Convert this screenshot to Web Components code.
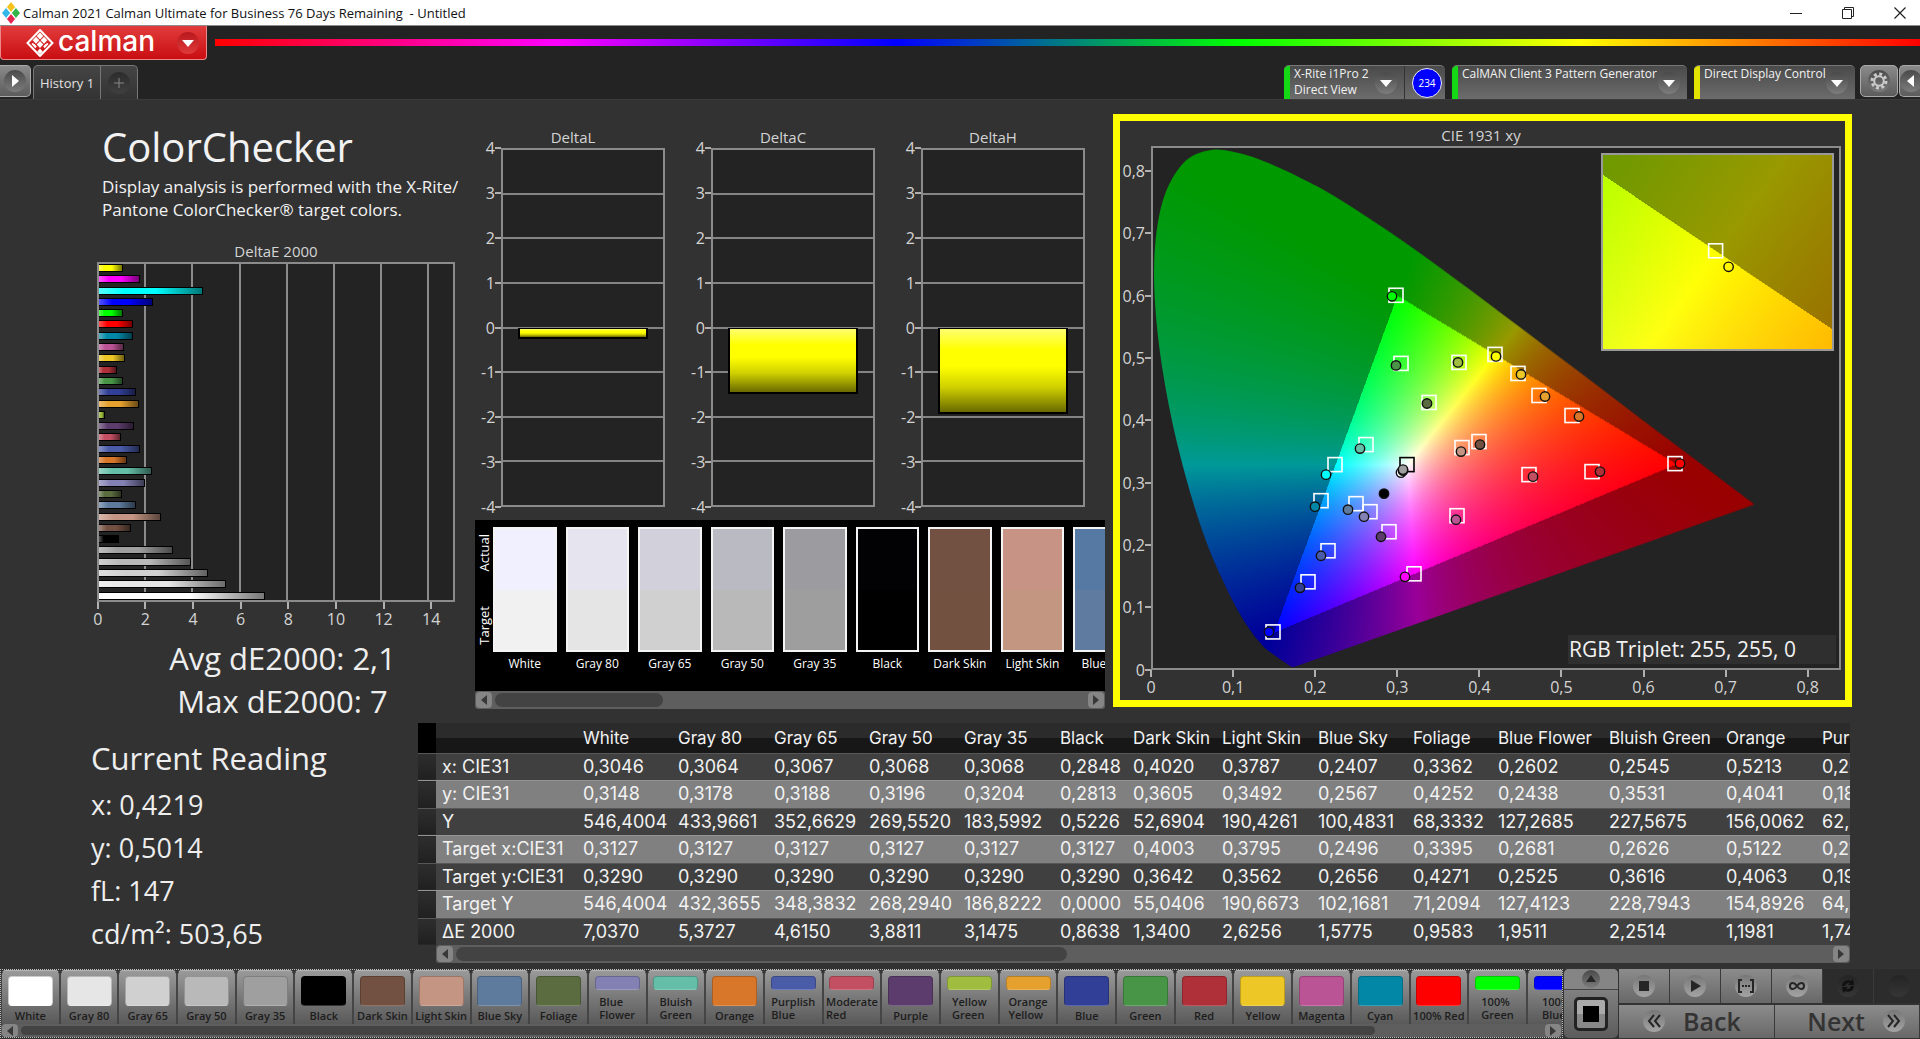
<!DOCTYPE html>
<html lang="en">
<head>
<meta charset="utf-8">
<title>Calman 2021</title>
<style>
html, body { margin: 0; height: 100%; }
body { background: #323232; color: #eee; font-family: "Open Sans", "Noto Sans", sans-serif; overflow: hidden; }
</style>
</head>
<body>
<calman-app></calman-app>
<script>
const RESET = `*{box-sizing:border-box}button{font:inherit;color:inherit;border:0;padding:0;margin:0;background:none;cursor:pointer}`;
function define(name, css, html, setup) {
  customElements.define(name, class extends HTMLElement {
    connectedCallback() {
      if (this.shadowRoot) return;
      const root = this.attachShadow({ mode: 'open' });
      root.innerHTML = `<style>${RESET}${css}</style>${typeof html === 'function' ? html(this) : html}`;
      if (setup) setup(root, this);
    }
  });
}

/* ---------- colour patches ---------- */
const PATCHES = [
  ['White', '#ffffff', 7.037], ['Gray 80', '#e6e6e6', 5.3727], ['Gray 65', '#d0d0d0', 4.615], ['Gray 50', '#b9b9b9', 3.8811],
  ['Gray 35', '#9f9f9f', 3.1475], ['Black', '#000000', .8638], ['Dark Skin', '#735142', 1.34], ['Light Skin', '#c49582', 2.6256],
  ['Blue Sky', '#5e7b9e', 1.5775], ['Foliage', '#5a6c40', .9583], ['Blue Flower', '#8380b3', 1.9511], ['Bluish Green', '#65bfa8', 2.2514],
  ['Orange', '#d8772a', 1.1981], ['Purplish Blue', '#4a5ba8', 1.74], ['Moderate Red', '#c35062', .95], ['Purple', '#5c3c6c', 1.5],
  ['Yellow Green', '#a0bd40', .27], ['Orange Yellow', '#e5a02e', 1.68], ['Blue', '#323f96', 1.56], ['Green', '#489548', 1],
  ['Red', '#af3038', .76], ['Yellow', '#ecc726', 1.12], ['Magenta', '#bb5494', 1.06], ['Cyan', '#0288a6', 1.42],
  ['100% Red', '#ff0000', 1.42], ['100% Green', '#00ff00', 1], ['100% Blue', '#0000ff', 2.28], ['100% Cyan', '#00ffff', 4.4],
  ['100% Magenta', '#ff00ff', 1.74], ['100% Yellow', '#ffff00', 1]
];
const ACTUAL = ['#f0f0ff', '#e5e4ef', '#d2d0da', '#babac2', '#9c9ba0', '#020204', '#735142', '#c69385', '#5579a2'];
const TARGET = ['#f1f1f1', '#e5e5e5', '#d0d0d0', '#b9b9b9', '#9e9e9e', '#000000', '#725140', '#c29681', '#5f7b9f'];

/* ---------- title bar ---------- */
define('title-bar', `
:host{display:flex;align-items:center;gap:40px;height:26px;background:#fff;color:#111;font-size:13px;border-bottom:1px solid #8a8a8a;padding:0 14px 0 2px}
.t{flex:1;display:flex;align-items:center;gap:3px;white-space:pre}
.mark{width:18px;height:22px}
button{width:12px;height:24px;display:grid;place-items:center}
`, `
<div class="t"><svg class="mark" viewBox="0 0 18 22"><path d="M9 0l4.500 5.500L9 11 4.500 5.500z" fill="#f6c21c"/><path d="M4.500 5.500L9 11l-4.500 5.500L0 11z" fill="#35b6e8"/><path d="M13.500 5.500L18 11l-4.500 5.500L9 11z" fill="#33b44a"/><path d="M9 11l4.500 5.500L9 22l-4.500-5.500z" fill="#e5254f"/><path d="M4.500 5.500l9 11M13.500 5.500l-9 11" stroke="#fff" stroke-width="1.200"/></svg><span>Calman 2021 Calman Ultimate for Business 76 Days Remaining  - Untitled</span></div>
<button aria-label="Minimize"><svg width="12" height="12"><path d="M0 6.500h12" stroke="#222"/></svg></button>
<button aria-label="Restore"><svg width="12" height="12" fill="none" stroke="#222"><path d="M.5 2.500h9v9h-9zM2.500 2.500v-2h9v9h-2"/></svg></button>
<button aria-label="Close"><svg width="12" height="12"><path d="M.5.5l11 11M11.500.5l-11 11" stroke="#222" stroke-width="1.200"/></svg></button>`);

/* ---------- small round icon ---------- */
define('round-icon', `
:host{display:grid;place-items:center;width:22px;height:22px;border-radius:50%;background:linear-gradient(var(--a,#4a4a4a),var(--b,#7c7c7c));color:#fff}
svg{display:block}`, el => {
  const k = el.getAttribute('kind');
  const p = {
    down: '<path d="M3 6h12l-6 7z" fill="currentColor"/>',
    right: '<path d="M6 3l7 6-7 6z" fill="currentColor"/>',
    left: '<path d="M12 3L5 9l7 6z" fill="currentColor"/>',
    up: '<path d="M4 12h10L9 5z" fill="currentColor"/>',
    plus: '<path d="M9 4v10M4 9h10" stroke="currentColor"/>',
    stop: '<path d="M4 4h10v10H4z" fill="currentColor"/>',
    play: '<path d="M5 3l10 6-10 6z" fill="currentColor"/>',
    step: '<path d="M5 3H2v12h3M13 3h3v12h-3" fill="none" stroke="currentColor" stroke-width="2"/><path d="M5 8h2v2H5zM8 8h2v2H8zM11 8h2v2h-2z" fill="currentColor"/>',
    loop: '<path d="M9 9C6 4.500 2 5.500 2 9s4 4.500 7 0 7-3.500 7 0-4 4.500-7 0z" fill="none" stroke="currentColor" stroke-width="2"/>',
    sync: '<path d="M3 9a6 6 0 0 1 9-5l2-2 1 6H9l2-2a4 4 0 0 0-5 3zM15 9a6 6 0 0 1-9 5l-2 2-1-6h6l-2 2a4 4 0 0 0 5-3z" fill="currentColor"/>',
    back: '<path d="M9 3L4 9l5 6M15 3l-5 6 5 6" fill="none" stroke="currentColor" stroke-width="2"/>',
    next: '<path d="M3 3l5 6-5 6M9 3l5 6-5 6" fill="none" stroke="currentColor" stroke-width="2"/>',
    gear: '<circle cx="9" cy="9" r="7" fill="none" stroke="currentColor" stroke-width="3" stroke-dasharray="2.900 2.600"/><circle cx="9" cy="9" r="4.800" fill="none" stroke="currentColor" stroke-width="2"/>',
    none: ''
  }[k];
  return `<svg width="18" height="18" viewBox="0 0 18 18">${p}</svg>`;
});

/* ---------- brand strip ---------- */
define('brand-strip', `
:host{display:flex;height:34px;background:#232323;gap:8px}
button{width:207px;display:flex;align-items:center;padding-left:25px;border:1px solid #e88;border-top:0;border-radius:0 0 4px 4px;background:linear-gradient(#e23c3c,#c90e12);color:#fff;font:500 28px/30px Inter,sans-serif}
button span{flex:1;margin-left:4px;text-align:left;padding-bottom:4px}
round-icon{--a:#b8191c;--b:#e03a3a;margin-right:7px}
i{flex:1;height:7px;margin-top:13px;background:linear-gradient(90deg,#f00,#f0f 20%,#00f 40%,#0f0 60%,#ff0 80%,#f00)}
`, `
<button aria-label="calman menu"><svg width="28" height="28" viewBox="0 0 28 28"><path d="M14 1l12.500 13L14 27 1.500 14z" fill="none" stroke="#fff" stroke-width="2"/><g fill="#fff"><path d="M14 4l3.300 3.500L14 11l-3.300-3.500zM10 8.300l3.300 3.500L10 15.300l-3.300-3.500zM18 8.300l3.300 3.500-3.300 3.500-3.300-3.500zM14 12.500l3.300 3.500-3.300 3.500L10.700 16z" transform="translate(0 -.5)"/><path d="M14 19.500l2.800 2.900L14 25.200l-2.800-2.800zM8.400 15l2.400 2.600-1.500 1.600L5.500 15l1-1.100zM19.600 15l-2.400 2.600 1.500 1.600 3.800-4.200-1-1.100z"/></g></svg><span>calman</span><round-icon kind="down"></round-icon></button><i></i>`);

/* ---------- tab row ---------- */
define('device-tab', `
:host{display:flex;height:34px;min-width:0;border-radius:5px 5px 0 0;overflow:hidden;background:linear-gradient(#4a4a4a,#6c6c6c);border-top:1px solid #777}
i{width:6px;background:var(--led)}
button{flex:1;display:flex;align-items:center;text-align:left;padding:0 7px 0 4px;min-width:0}
span{flex:1;align-self:flex-start;font-size:12px;line-height:16px;white-space:nowrap;color:#f2f2f2}
`, el => `<i></i><button><span><slot></slot></span><round-icon kind="down"></round-icon></button><slot name="meter"></slot>`);

define('tab-row', `
:host{display:flex;height:39px;background:#232323;align-items:flex-end}
.sq{height:32px;border:1px solid #aaa;border-radius:5px;display:grid;place-items:center;background:linear-gradient(#8a8a8a,#5c5c5c);align-self:flex-start;margin-top:5px}
.open{width:31px;border-left:0;border-radius:0 5px 5px 0;margin-right:2px}
.hist{display:flex;height:34px;border:1px solid #777;border-bottom:0;border-radius:5px 5px 0 0;background:linear-gradient(#454545,#333);overflow:hidden}
.hist button{font-size:13px;padding:0 6px;color:#e2e2e2}
.hist button+button{border-left:1px solid #777;width:37px;display:grid;place-items:center}
.hist round-icon{--a:#2c2c2c;--b:#404040;color:#888}
.gap{flex:1}
device-tab{margin-right:7px}
.m{display:grid;place-items:center;width:41px;padding-left:4px;border-left:1px solid #333}
b{display:grid;place-items:center;width:30px;height:30px;border-radius:50%;background:#00f;border:1px solid #eee;font-size:10px;font-weight:400;color:#fff}
.gear{width:38px;margin-right:1px;margin-left:-2px}
.gear round-icon{color:#ccc}
.more{width:21px;border-right:0;border-radius:5px 0 0 5px}
`, `
<button class="sq open" aria-label="Open panel"><round-icon kind="right"></round-icon></button>
<div class="hist"><button>History 1</button><button aria-label="Add tab"><round-icon kind="plus"></round-icon></button></div>
<div class="gap"></div>
<device-tab style="--led:#14d814;width:161px">X-Rite i1Pro 2<br>Direct View<div class="m" slot="meter"><b>234</b></div></device-tab>
<device-tab style="--led:#14d814;width:235px">CalMAN Client 3 Pattern Generator</device-tab>
<device-tab style="--led:#e3e300;width:161px">Direct Display Control</device-tab>
<button class="sq gear" aria-label="Settings"><round-icon kind="gear"></round-icon></button>
<button class="sq more" aria-label="Expand"><round-icon kind="left"></round-icon></button>`);

/* ---------- scroll bar ---------- */
define('scroll-bar', `
:host{display:flex;align-items:center;height:18px;padding:0 1px;gap:3px;background:#5e5e5e;border-radius:3px}
button{width:16px;height:100%;max-height:16px;background:#858585;border-radius:4px;display:grid;place-items:center}
.t{flex:1;height:100%;padding:2px 0}
.t div{height:100%;border-radius:7px;background:#434343;width:var(--thumb)}
`, `<button aria-label="Scroll left"><svg width="6" height="10"><path d="M6 0v10L0 5z" fill="#383838"/></svg></button><div class="t"><div></div></div><button aria-label="Scroll right"><svg width="6" height="10"><path d="M0 0v10l6-5z" fill="#383838"/></svg></button>`);

/* ---------- DeltaE chart ---------- */
define('delta-e-chart', `
:host{display:block;color:#d4d4d4}
h2{margin:0 0 1px;font-size:15px;line-height:20px;font-weight:400;text-align:center}
.plot{display:grid;height:340px;border:2px solid #8b8b8b;background:#232323}
.plot>div{grid-area:1/1;min-width:0;min-height:0}
.grid{display:flex}
.grid i{width:13.333%;border-right:2px solid #8b8b8b}
.bars{display:flex;flex-direction:column;justify-content:space-between}
.bars i{height:8px;border:1px solid #000;border-left:0;background:linear-gradient(90deg,#fff5,#fff0 25% 55%,#0008),var(--c)}
.axis{display:flex;margin-left:-23px}
.axis span{width:12.500%;text-align:center;font-size:16px;line-height:20px}
.axis span::before{content:"";display:block;width:2px;height:7px;margin:0 auto;background:#b0b0b0}
`, () => `<h2>DeltaE 2000</h2><div class="plot"><div class="grid">${'<i></i>'.repeat(7)}</div><div class="bars">${PATCHES.slice().reverse().map(p => `<i style="--c:${p[1]};width:${p[2] / 15 * 100}%"></i>`).join('')}</div></div><div class="axis">${[0, 2, 4, 6, 8, 10, 12, 14].map(n => `<span>${n}</span>`).join('')}</div>`);

/* ---------- DeltaL / C / H chart ---------- */
define('delta-chart', `
:host{display:block;color:#d4d4d4;min-width:0}
h2{margin:0 0 1px;font-size:15px;line-height:20px;font-weight:400;text-align:center}
.row{display:flex;height:359px}
.lab{width:20px;display:flex;flex-direction:column;margin:-22px 0}
.lab span{flex:1;display:flex;align-items:center;justify-content:flex-end;font-size:16px;line-height:20px}
.lab span::after{content:"";width:6px;height:2px;background:#b0b0b0}
.plot{flex:1;display:grid;background:#232323;border:2px solid #8b8b8b}
.plot>div{grid-area:1/1}
.grid{display:flex;flex-direction:column}
.grid i{flex:1;border-bottom:2px solid #848484}
.grid i:last-child{border:0}
.hold{display:grid;grid-template-rows:1fr 1fr}
.hold i{grid-row:2;margin:0 15px;border:2px solid #000;border-top-width:1px;background:linear-gradient(#ffff70,#ff0 25% 45%,#d0d000 70%,#6a6a00)}
`, el => `<h2>${el.getAttribute('label')}</h2><div class="row"><div class="lab">${[4, 3, 2, 1, 0, -1, -2, -3, -4].map(n => `<span>${n}</span>`).join('')}</div><div class="plot"><div class="grid">${'<i></i>'.repeat(8)}</div><div class="hold"><i style="height:${-el.getAttribute('value') * 25}%"></i></div></div></div>`);

/* ---------- actual / target swatches ---------- */
define('swatch-strip', `
:host{display:flex;flex-direction:column;min-width:0}
.box{display:flex;height:171px;background:#000;padding-top:7px;overflow:hidden}
.side{width:18px;height:125px;padding:7px 0;display:flex;flex-direction:column-reverse;justify-content:space-between;align-items:center}
.side span{writing-mode:vertical-rl;transform:rotate(180deg);font-size:13px;line-height:16px;color:#fff}
.list{flex:1;min-width:0;display:grid;grid-auto-flow:column;grid-auto-columns:11.850%}
.c{padding-right:9px;min-width:0;font-size:12px;line-height:20px;color:#fff;text-align:center;white-space:nowrap}
.c i{display:block;height:125px;margin-bottom:2px;border:2px solid #f4f4f4;background:linear-gradient(var(--a) 50%,var(--t) 50%)}
`, () => `<div class="box"><div class="side"><span>Target</span><span>Actual</span></div><div class="list">${ACTUAL.map((a, i) => `<div class="c"><i style="--a:${a};--t:${TARGET[i]}"></i>${PATCHES[i][0]}</div>`).join('')}</div></div><scroll-bar style="--thumb:28.500%"></scroll-bar>`);

/* ---------- CIE diagram ---------- */
const LOCUS = [[.1741,.005],[.1714,.0051],[.1689,.0069],[.1644,.0109],[.1566,.0177],[.144,.0297],[.1355,.0399],[.1241,.0578],[.1096,.0868],[.0913,.1327],[.0687,.2007],[.0454,.295],[.0235,.4127],[.0082,.5384],[.0039,.6548],[.0139,.7502],[.0389,.812],[.0743,.8338],[.1142,.8262],[.1547,.8059],[.1929,.7816],[.2296,.7543],[.3016,.6923],[.3731,.6245],[.4441,.5547],[.5125,.4866],[.5752,.4242],[.627,.3725],[.6658,.334],[.6915,.3083],[.719,.2809],[.7347,.2653]];
const MARKS = [
  [245,149,241,150,'#00ff00'],[250,217,245,219,'#4a9448'],[308,216,307,216,'#9fbd40'],[278,256,276,257,'#5a6b40'],[344,208,345,210,'#ffff00'],
  [215,298,209,302,'#65bfa8'],[184,318,175,328,'#00ffff'],[170,354,164,360,'#0288a6'],[205,357,197,363,'#5e7b9e'],[219,365,213,370,'#8380b3'],
  [238,385,230,390,'#5c3c6c'],[177,404,170,409,'#4a5ba8'],[157,435,149,441,'#323f96'],[122,485,118,485,'#0000ff'],[263,427,254,430,'#ff00ff'],
  [306,369,305,373,'#bb5494'],[311,301,310,305,'#c49582'],[328,295,329,298,'#735142'],[367,227,370,228,'#ecc726'],[388,249,394,250,'#e5a02e'],
  [421,269,428,270,'#d8772a'],[378,328,382,330,'#c35062'],[441,325,449,325,'#af3038'],[524,317,529,317,'#ff0000']
];
/* Fills a canvas with the linear sRGB hue of each chromaticity; colours outside the gamut are dimmed. */
function shade(canvas, x0, x1, y0, y1) {
  const w = canvas.width, h = canvas.height, ctx = canvas.getContext('2d'), img = ctx.createImageData(w, h);
  for (let j = 0; j < h; j++) for (let i = 0; i < w; i++) {
    const x = x0 + (x1 - x0) * (i + .5) / w, y = y1 - (y1 - y0) * (j + .5) / h, z = 1 - x - y;
    let c = [3.2406 * x - 1.5372 * y - .4986 * z, -.9689 * x + 1.8758 * y + .0415 * z, .0557 * x - .204 * y + 1.057 * z];
    const k = Math.min(...c) < 0 ? .6 : 1;
    c = c.map(v => Math.max(v, 0));
    const m = Math.max(...c), o = (j * w + i) * 4;
    for (let n = 0; n < 3; n++) img.data[o + n] = 255 * k * c[n] / m;
    img.data[o + 3] = 255;
  }
  return [ctx, img];
}
define('cie-diagram', `
:host{display:flex;flex-direction:column;border:7px solid #ff0;padding:4px 4px 0 1px;color:#d4d4d4;background:#323232;min-width:0}
h2{margin:0 0 1px;font-size:15px;line-height:20px;font-weight:400;text-align:center}
.row{flex:1;display:flex;min-height:0}
.y{width:30px;display:flex;flex-direction:column-reverse;margin-bottom:-31px}
.y span{flex:0 0 11.240%;display:flex;align-items:center;justify-content:flex-end;font-size:16px;line-height:20px}
.y span::after{content:"";width:6px;height:2px;background:#b0b0b0}
.plot{flex:1;min-width:0;position:relative;border:2px solid #8b8b8b;background:#232323}
.plot>canvas,.plot>svg{position:absolute;left:-2px;top:-2px;width:calc(100% + 4px);height:calc(100% + 4px)}
.zoom{position:absolute;right:5px;top:5px;width:34%;height:38%;border:2px solid #999}
.zoom canvas,.zoom svg{position:absolute;inset:0;width:100%;height:100%}
.rgb{position:absolute;right:3px;bottom:4px;width:268px;background:#2f2f2f;color:#f2f2f2;font-size:21px;line-height:29px;padding-left:1px}
.x{display:flex;height:30px;margin-left:-11px}
.x span{flex:0 0 11.230%;text-align:center;font-size:16px;line-height:20px}
.x span::before{content:"";display:block;width:2px;height:7px;margin:0 auto;background:#b0b0b0}
`, () => {
  const v = [0, '0,1', '0,2', '0,3', '0,4', '0,5', '0,6', '0,7', '0,8'].map(n => `<span>${n}</span>`).join('');
  const sq = (x, y, c) => `<rect x="${x - 7}" y="${y - 7}" width="14" height="14" fill="none" stroke="${c}" stroke-width="1.600"/>`;
  const ci = (x, y, c) => `<circle cx="${x}" cy="${y}" r="4.700" fill="${c}" stroke="#111" stroke-width="1.400"/>`;
  return `<h2>CIE 1931 xy</h2><div class="row"><div class="y">${v}</div><div class="plot"><canvas width="690" height="523"></canvas>
<svg viewBox="0 0 690 523" preserveAspectRatio="none">${MARKS.map(m => sq(m[0], m[1], '#fff') + ci(m[2], m[3], m[4])).join('')}${sq(256, 318, '#000')}${ci(250, 326, '#fff')}${ci(252, 324, '#b9b9b9')}${ci(252, 323, '#9f9f9f')}${ci(233, 347, '#000')}</svg>
<div class="zoom"><canvas width="230" height="194"></canvas><svg viewBox="0 0 230 194" preserveAspectRatio="none">${sq(113, 96, '#fff')}${ci(126, 112, 'none')}</svg></div>
<div class="rgb">RGB Triplet: 255, 255, 0</div></div></div><div class="x">${v}</div>`;
}, root => {
  const [big, small] = root.querySelectorAll('canvas');
  const [ctx, img] = shade(big, 0, .84, 0, .84);
  const tmp = document.createElement('canvas'); tmp.width = 690; tmp.height = 523;
  tmp.getContext('2d').putImageData(img, 0, 0);
  const P = LOCUS.map(([x, y]) => [x / .84 * 690, 523 - y / .84 * 523]);
  ctx.beginPath(); ctx.moveTo(...P[0]);
  for (let i = 0; i < P.length - 1; i++) {
    const a = P[i - 1] || P[i], b = P[i], c = P[i + 1], d = P[i + 2] || c;
    ctx.bezierCurveTo(b[0] + (c[0] - a[0]) / 6, b[1] + (c[1] - a[1]) / 6, c[0] - (d[0] - b[0]) / 6, c[1] - (d[1] - b[1]) / 6, c[0], c[1]);
  }
  ctx.closePath(); ctx.clip(); ctx.drawImage(tmp, 0, 0);
  const [c2, i2] = shade(small, .396, .4426, .482, .5286);
  c2.putImageData(i2, 0, 0);
});

/* ---------- readings table ---------- */
const COLS = ['', 'White', 'Gray 80', 'Gray 65', 'Gray 50', 'Gray 35', 'Black', 'Dark Skin', 'Light Skin', 'Blue Sky', 'Foliage', 'Blue Flower', 'Bluish Green', 'Orange', 'Purplish Blue'];
const WIDTHS = [141, 95, 96, 95, 95, 96, 73, 89, 96, 95, 85, 111, 117, 96, 130];
const ROWS = [
  ['x: CIE31', '0,3046', '0,3064', '0,3067', '0,3068', '0,3068', '0,2848', '0,4020', '0,3787', '0,2407', '0,3362', '0,2602', '0,2545', '0,5213', '0,2084'],
  ['y: CIE31', '0,3148', '0,3178', '0,3188', '0,3196', '0,3204', '0,2813', '0,3605', '0,3492', '0,2567', '0,4252', '0,2438', '0,3531', '0,4041', '0,1832'],
  ['Y', '546,4004', '433,9661', '352,6629', '269,5520', '183,5992', '0,5226', '52,6904', '190,4261', '100,4831', '68,3332', '127,2685', '227,5675', '156,0062', '62,5210'],
  ['Target x:CIE31', '0,3127', '0,3127', '0,3127', '0,3127', '0,3127', '0,3127', '0,4003', '0,3795', '0,2496', '0,3395', '0,2681', '0,2626', '0,5122', '0,2162'],
  ['Target y:CIE31', '0,3290', '0,3290', '0,3290', '0,3290', '0,3290', '0,3290', '0,3642', '0,3562', '0,2656', '0,4271', '0,2525', '0,3616', '0,4063', '0,1920'],
  ['Target Y', '546,4004', '432,3655', '348,3832', '268,2940', '186,8222', '0,0000', '55,0406', '190,6673', '102,1681', '71,2094', '127,4123', '228,7943', '154,8926', '64,2290'],
  ['ΔE 2000', '7,0370', '5,3727', '4,6150', '3,8811', '3,1475', '0,8638', '1,3400', '2,6256', '1,5775', '0,9583', '1,9511', '2,2514', '1,1981', '1,7430']
];
define('readings-table', `
:host{display:block;min-width:0}
.clip{overflow:hidden}
table{table-layout:fixed;width:1528px;height:222px;border-collapse:collapse;font:400 18px/22px Inter,"Open Sans",sans-serif;color:#f2f2f2}
th,td{padding:0 0 0 6px;text-align:left;font-weight:400;white-space:nowrap}
thead tr{height:30px}
thead th{background:linear-gradient(#2b2b2b 50%,#171717 50%);font-size:17px}
thead th:first-child{background:#000}
tbody tr{background:#404040;border-top:1px solid #575757}
tbody tr:nth-child(even){background:#808080;border-top-color:#949494}
tbody td:first-child{background:linear-gradient(#2e2e2e,#202020)}
scroll-bar{margin-left:18px}
`, () => `<div class="clip"><table><colgroup><col style="width:18px">${WIDTHS.map(w => `<col style="width:${w}px">`).join('')}</colgroup><thead><tr><th></th>${COLS.map(c => `<th>${c}</th>`).join('')}</tr></thead><tbody>${ROWS.map(r => `<tr><td></td><th>${r[0]}</th>${r.slice(1).map(c => `<td>${c}</td>`).join('')}</tr>`).join('')}</tbody></table></div><scroll-bar style="--thumb:44.500%"></scroll-bar>`);

/* ---------- bottom bar ---------- */
define('patch-button', `
:host{display:block;min-width:0}
button{width:100%;height:56px;display:flex;flex-direction:column;align-items:center;padding:5px 0 3px;border:1px solid #454545;border-top-color:#b5b5b5;border-radius:5px 5px 3px 3px;background:linear-gradient(#999,#585858);color:#1d1d1d;font-size:11px;line-height:13px;font-weight:600;text-align:left}
i{width:45px;flex:1;border-radius:4px;background:var(--c);border:1px solid #0003;border-bottom-color:#fff3;margin-bottom:3px}
i.short{flex:none;height:14px;margin-bottom:5px}
span{white-space:pre}
`, el => { const l = el.getAttribute('label'); return `<button><i class="${l.includes('\n') ? 'short' : ''}"></i><span>${l}</span></button>`; });

define('bottom-bar', `
:host{display:flex;height:71px;background:#333;padding:1px 0 1px;overflow:hidden}
.pal{flex:1;min-width:0;border:1px dotted #bbb;display:flex;flex-direction:column;overflow:hidden}
.list{flex:1;display:grid;grid-auto-flow:column;grid-auto-columns:3.760%;min-height:0}
scroll-bar{height:13px;flex:none}
.pick{width:54px;display:flex;flex-direction:column;margin:0 1px;border-radius:5px;overflow:hidden;background:linear-gradient(#909090,#5c5c5c)}
.pick button{display:grid;place-items:center}
.pick button:first-child{height:21px;border-bottom:1px solid #444;background:#858585}
.pick button+button{flex:1}
.pick round-icon{width:18px;height:18px}
.target{width:34px;height:34px;border:3px solid #222;border-radius:5px;background:linear-gradient(#aaa 50%,#888 50%);display:grid;place-items:center}
.target::after{content:"";width:16px;height:16px;background:#000}
.ctl{width:301px;display:flex;flex-direction:column;gap:2px;--a:#777;--b:#a4a4a4}
.r{display:flex;flex:1}
.r button{flex:0 0 51px;display:flex;align-items:center;justify-content:center;border-right:1px solid #3a3a3a;background:linear-gradient(#8c8c8c,#686868);color:#222}
.r button.off{background:#2c2c2c;--a:#242424;--b:#363636}
.r round-icon,.pick round-icon{color:#262626}
.r button.off round-icon{color:#111}
.nav button{flex:1 0 0;justify-content:flex-start;padding-left:24px;gap:18px;font-size:25px;line-height:30px;font-weight:600;color:#333}
.nav button+button{justify-content:flex-end;padding:0 14px 0 0}
`, () => {
  const two = ['Blue Flower', 'Bluish Green', 'Purplish Blue', 'Moderate Red', 'Yellow Green', 'Orange Yellow', '100% Green', '100% Blue'];
  return `<div class="pal"><div class="list">${PATCHES.slice(0, 27).map(p => `<patch-button style="--c:${p[1]}" label="${two.includes(p[0]) ? p[0].replace(' ', '\n') : p[0]}"></patch-button>`).join('')}</div><scroll-bar style="--thumb:89%"></scroll-bar></div>
<div class="pick"><button aria-label="Collapse"><round-icon kind="up"></round-icon></button><button aria-label="Pattern window"><div class="target"></div></button></div>
<div class="ctl"><div class="r">${['stop', 'play', 'step', 'loop', 'sync', 'none'].map((k, i) => `<button aria-label="${k}" class="${i > 3 ? 'off' : ''}"><round-icon kind="${k}"></round-icon></button>`).join('')}</div><div class="r nav"><button><round-icon kind="back"></round-icon>Back</button><button>Next<round-icon kind="next"></round-icon></button></div></div>`;
});

/* ---------- page ---------- */
define('calman-app', `
:host{display:flex;flex-direction:column;min-height:100vh}
main{flex:1;background:#323232;border-top:1px solid #3a3a3a}
.top{display:grid;grid-template-columns:475fr 638fr 807fr}
.left{padding:23px 20px 0 97px;min-width:0}
h1{margin:0 0 4px 5px;font-size:40px;line-height:48px;font-weight:400;color:#f2f2f2}
.desc{margin:0 -20px 20px 5px;font-size:17px;line-height:23px;color:#f2f2f2;white-space:nowrap}
.sum{font-size:31px;line-height:43px;text-align:center;margin-top:8px;color:#eee;padding-left:13px}
.mid{padding-top:27px;min-width:0}
.deltas{display:grid;grid-template-columns:repeat(3,1fr);gap:26px;padding:0 28px 0 6px;margin-bottom:13px}
swatch-strip{margin-right:8px}
cie-diagram{margin:14px 68px 16px 0}
.low{display:flex}
.read{width:418px;flex:none;padding:14px 0 0 91px;font-size:27px;line-height:43px}
.read h2{margin:0 0 3px;font-size:31px;line-height:43px;font-weight:400}
.read p{margin:0}
readings-table{flex:1;margin-right:70px}
`, `
<title-bar></title-bar><brand-strip></brand-strip><tab-row></tab-row>
<main>
 <div class="top">
  <section class="left"><h1>ColorChecker</h1><div class="desc">Display analysis is performed with the X-Rite/<br>Pantone ColorChecker® target colors.</div><delta-e-chart></delta-e-chart><div class="sum">Avg dE2000: 2,1<br>Max dE2000: 7</div></section>
  <section class="mid"><div class="deltas"><delta-chart label="DeltaL" value="-.26"></delta-chart><delta-chart label="DeltaC" value="-1.5"></delta-chart><delta-chart label="DeltaH" value="-1.96"></delta-chart></div><swatch-strip></swatch-strip></section>
  <cie-diagram></cie-diagram>
 </div>
 <div class="low"><section class="read"><h2>Current Reading</h2><p>x: 0,4219</p><p>y: 0,5014</p><p>fL: 147</p><p>cd/m²: 503,65</p></section><readings-table></readings-table></div>
</main>
<bottom-bar></bottom-bar>`);
</script>
</body>
</html>
